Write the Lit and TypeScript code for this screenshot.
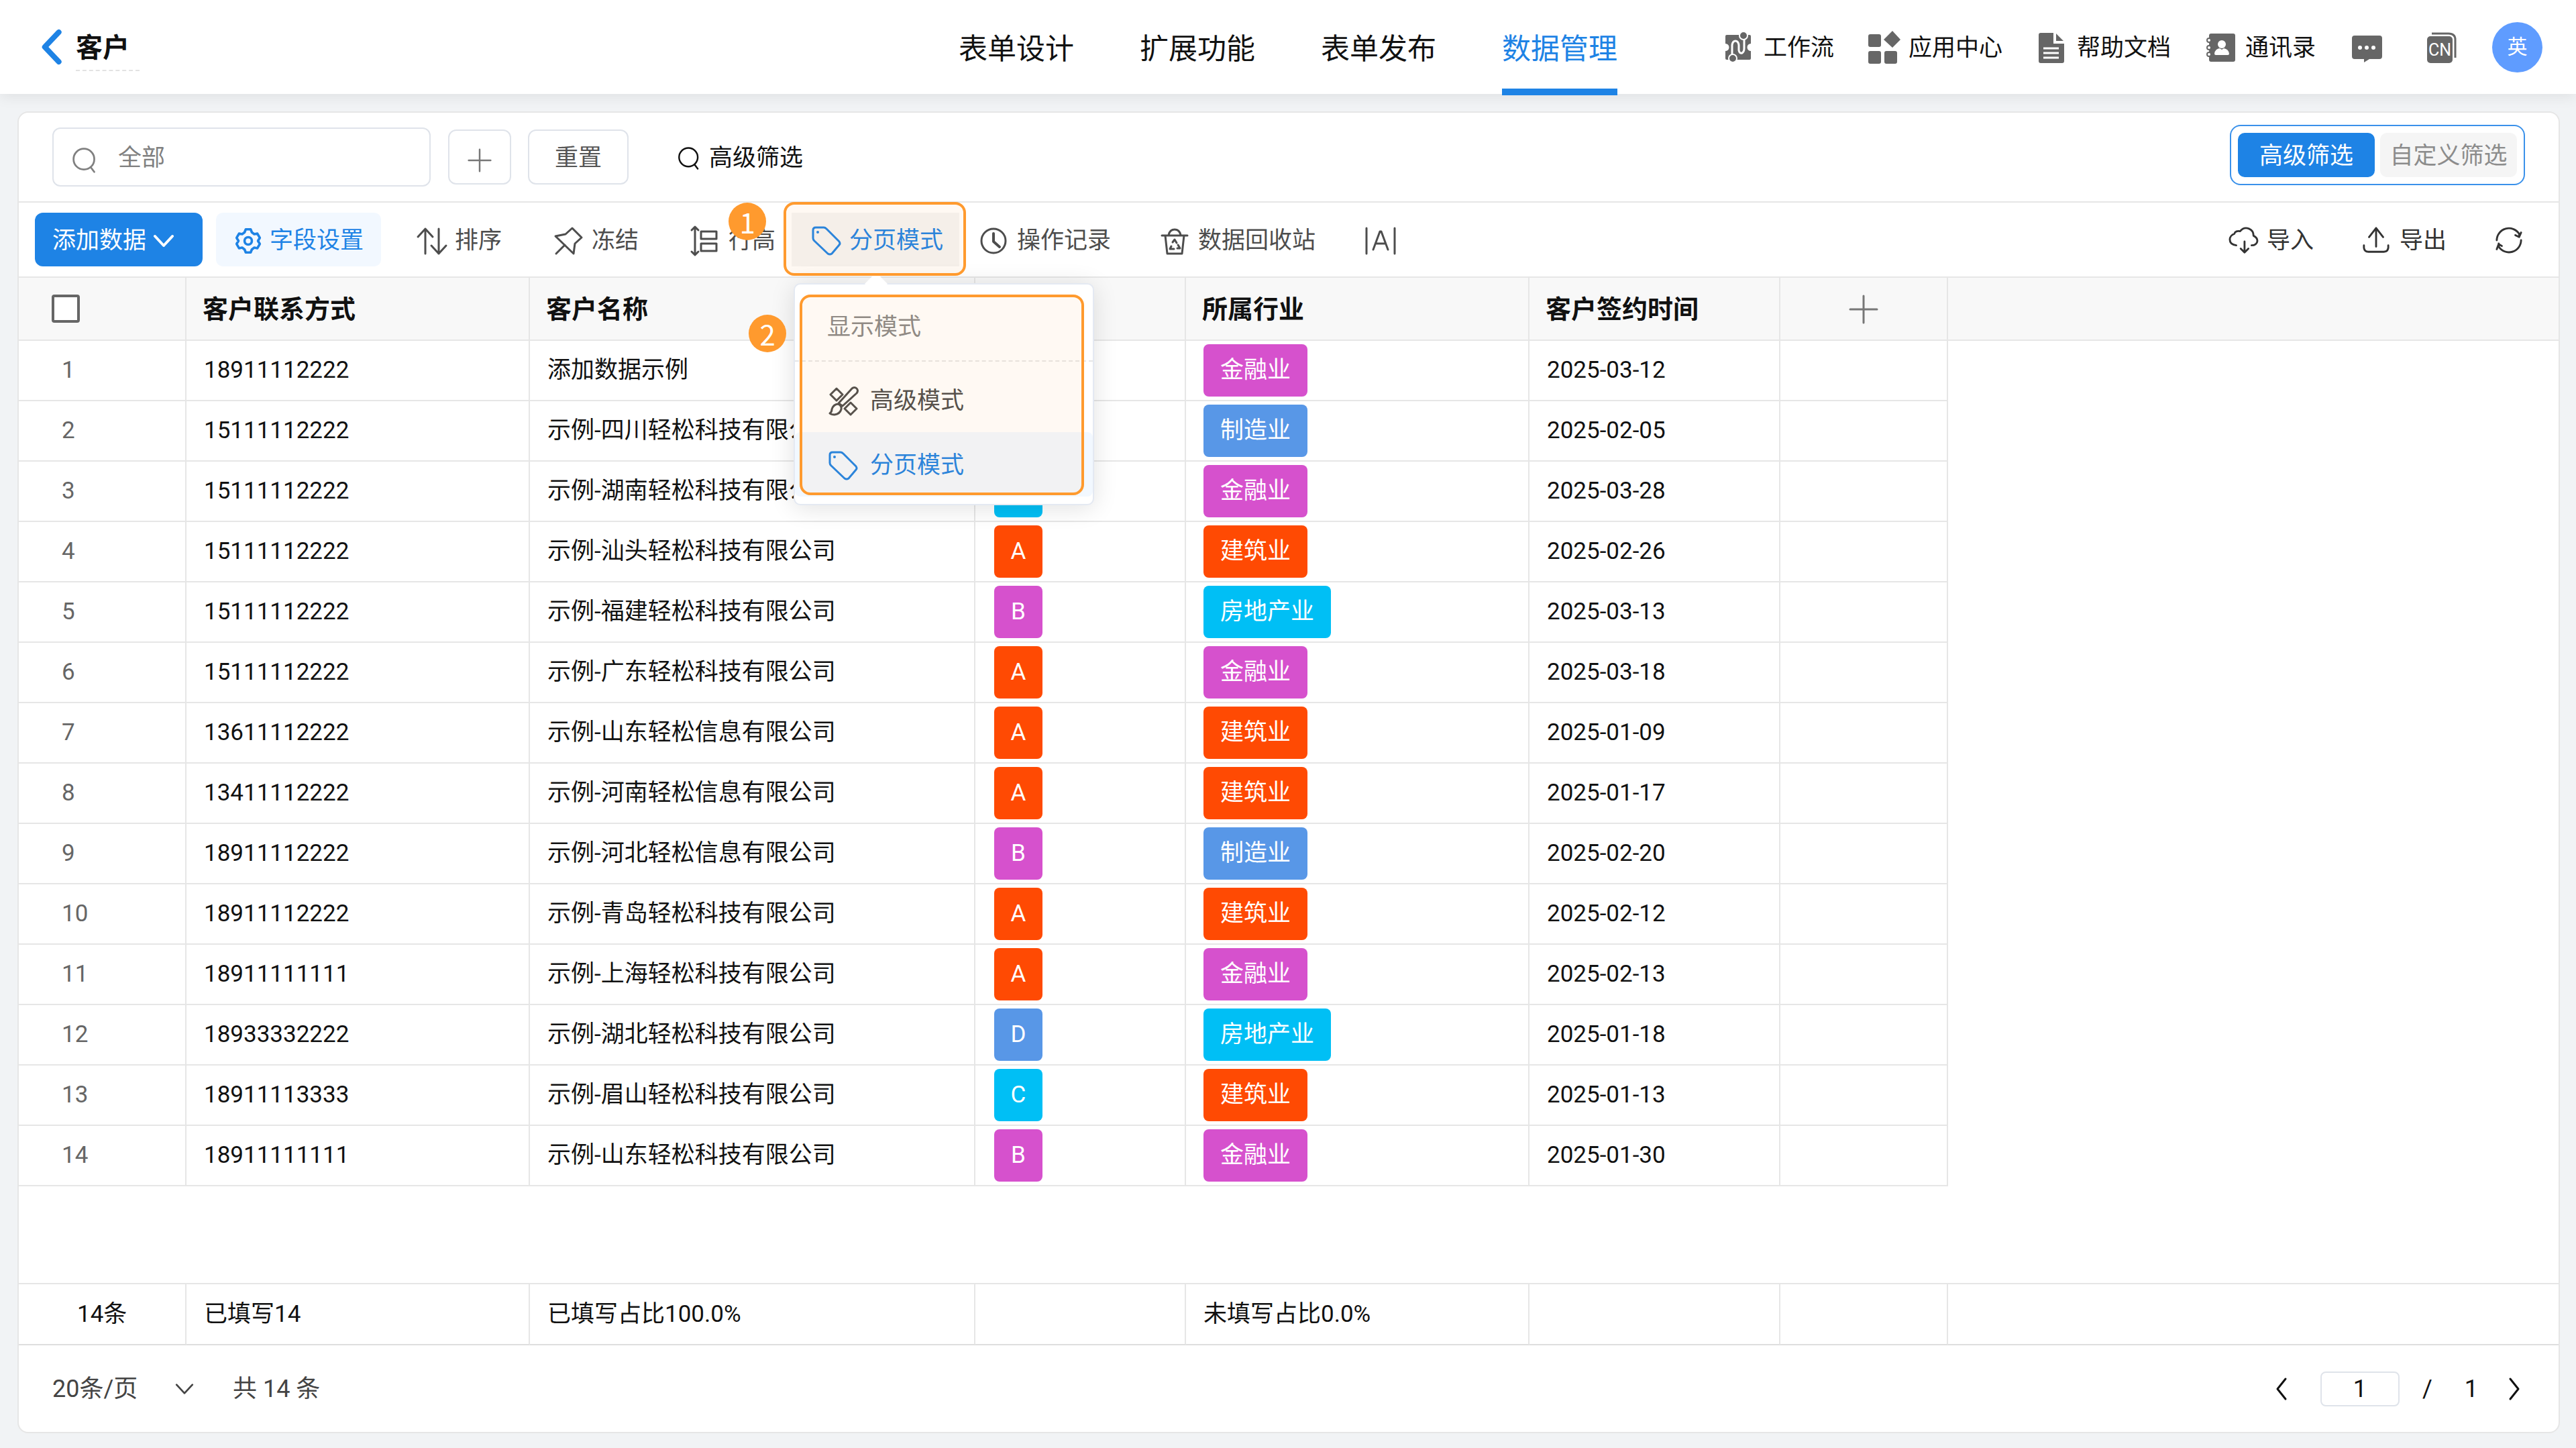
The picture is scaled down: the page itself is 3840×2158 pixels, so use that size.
import { LitElement, html, css, svg, nothing } from "lit";
import { customElement, state } from "lit/decorators.js";
import { classMap } from "lit/directives/class-map.js";

type Tone = "magenta" | "blue" | "red" | "cyan";

interface Customer {
  phone: string;
  name: string;
  level: string;
  industry: string;
  signed: string;
}

const ROWS: Customer[] = [
  { phone: "18911112222", name: "添加数据示例", level: "", industry: "金融业", signed: "2025-03-12" },
  { phone: "15111112222", name: "示例-四川轻松科技有限公司", level: "", industry: "制造业", signed: "2025-02-05" },
  { phone: "15111112222", name: "示例-湖南轻松科技有限公司", level: "C", industry: "金融业", signed: "2025-03-28" },
  { phone: "15111112222", name: "示例-汕头轻松科技有限公司", level: "A", industry: "建筑业", signed: "2025-02-26" },
  { phone: "15111112222", name: "示例-福建轻松科技有限公司", level: "B", industry: "房地产业", signed: "2025-03-13" },
  { phone: "15111112222", name: "示例-广东轻松科技有限公司", level: "A", industry: "金融业", signed: "2025-03-18" },
  { phone: "13611112222", name: "示例-山东轻松信息有限公司", level: "A", industry: "建筑业", signed: "2025-01-09" },
  { phone: "13411112222", name: "示例-河南轻松信息有限公司", level: "A", industry: "建筑业", signed: "2025-01-17" },
  { phone: "18911112222", name: "示例-河北轻松信息有限公司", level: "B", industry: "制造业", signed: "2025-02-20" },
  { phone: "18911112222", name: "示例-青岛轻松科技有限公司", level: "A", industry: "建筑业", signed: "2025-02-12" },
  { phone: "18911111111", name: "示例-上海轻松科技有限公司", level: "A", industry: "金融业", signed: "2025-02-13" },
  { phone: "18933332222", name: "示例-湖北轻松科技有限公司", level: "D", industry: "房地产业", signed: "2025-01-18" },
  { phone: "18911113333", name: "示例-眉山轻松科技有限公司", level: "C", industry: "建筑业", signed: "2025-01-13" },
  { phone: "18911111111", name: "示例-山东轻松科技有限公司", level: "B", industry: "金融业", signed: "2025-01-30" },
];

const LEVEL_TONE: Record<string, Tone> = { A: "red", B: "magenta", C: "cyan", D: "blue" };
const INDUSTRY_TONE: Record<string, Tone> = {
  金融业: "magenta",
  制造业: "blue",
  建筑业: "red",
  房地产业: "cyan",
};

/** Line icons on a 44 × 44 canvas, filled header icons on a 50 × 50 one. */
const SHAPES = {
  back: svg`<path d="M29 3 11 22 29 41" stroke-width="7"/>`,
  search: svg`<circle cx="21" cy="20" r="17"/><path d="M32 33 38 41"/>`,
  plus: svg`<path d="M22 2V42M2 22H42"/>`,
  chevron: svg`<path d="M9 15 22 29 35 15"/>`,
  left: svg`<path d="M28 7 16 22 28 37"/>`,
  right: svg`<path d="M16 7 28 22 16 37"/>`,
  gear: svg`<path d="M18 3h8l2 5 4 3 5-1 4 7-3 5 3 5-4 7-5-1-4 3-2 5h-8l-2-5-4-3-5 1-4-7 3-5-3-5 4-7 5 1 4-3Z"/><circle cx="22" cy="22" r="6"/>`,
  sort: svg`<path d="M12 41V4M1 16 12 4 23 16M32 4V41M21 29 32 41 43 29"/>`,
  pin: svg`<path d="M27 3 41 17 31 26 29 41 2 15 17 12ZM16 28 3 41"/>`,
  rowHeight: svg`<path d="M6 1V43M1 6 6 1 11 6M1 38 6 43 11 38M15 8H38V19H15ZM15 26H38V37H15Z"/>`,
  tag: svg`<path d="M6 2H18Q20 2 22 4L41 23Q43 26 41 28L30 41Q27 43 24 41L4 22Q2 20 2 18V6Q2 2 6 2Z"/><circle cx="9" cy="9" r="1" stroke-width="2"/>`,
  clock: svg`<circle cx="21" cy="22" r="18"/><path d="M21 11V23L30 31" stroke-width="4"/>`,
  recycle: svg`<path d="M2 14H40M7 14 10 41H32L35 14M12 13Q14 5 21 5 28 5 30 13" /><path d="M18 24 21 20 24 25M26 28 29 33H25M20 34H14L16 30" stroke-width="3"/>`,
  autoWidth: svg`<path d="M2 3V41M44 3V41M12 35 22 8H24L34 35M16 26H30" stroke-width="3"/>`,
  cloud: svg`<path d="M11 29C4 28 1 25 1 20 1 15 5 12 8 11 9 7 13 6 17 7 21 2 26 1 31 3 36 5 38 9 38 14 42 16 44 19 44 22 44 26 40 29 35 29M24 23V40M18 34 24 40 30 34"/>`,
  upload: svg`<path d="M22 31V2M11 16 22 2 33 16M3 29V33Q4 39 10 39H34Q40 39 41 33V29"/>`,
  refresh: svg`<path d="M3 21A19 19 0 0 1 38 11V16L32 13M41 9 38 16M41 21A19 19 0 0 1 6 31V26M3 35 6 27 11 30"/>`,
  brush: svg`<path d="M12 3 21 12 12 21 3 12ZM33 24 42 33 33 42 24 33ZM35 3Q39 0 42 3 45 6 42 10L21 29 15 25ZM14 26Q20 28 19 34 17 41 9 42 4 42 2 40 5 38 5 34 7 27 14 26Z"/>`,
};

const SOLIDS = {
  flow: svg`<path fill="currentColor" d="M7 7H39Q41 7 41 9V20A5 5 0 0 0 41 31V42Q41 44 39 44H5Q3 44 3 42V31A5 5 0 0 0 3 20V9Q3 7 5 7Z"/>
    <path fill="none" stroke="#fff" stroke-width="3" d="M13 36V22Q14 16 18 16 22 16 23 22V30Q24 35 28 34 31 32 31 27V12"/>
    <g fill="currentColor" stroke="#fff" stroke-width="2"><circle cx="30" cy="8" r="6"/><circle cx="14" cy="42" r="6"/></g>`,
  apps: svg`<g fill="currentColor"><rect x="0" y="6" width="19" height="19" rx="3"/><rect x="0" y="31" width="19" height="19" rx="3"/><rect x="24" y="31" width="19" height="19" rx="3"/><path d="M36 1 48 14 36 26 23 14Z"/></g>`,
  doc: svg`<path fill="currentColor" d="M6 4H25V20H41V46Q41 49 38 49H6Q3 49 3 46V7Q3 4 6 4ZM29 5 40 16H29Z"/>
    <path stroke="#fff" stroke-width="3" d="M10 27H33M10 34H33M10 41H33"/>`,
  contacts: svg`<path fill="currentColor" d="M9 5H42Q45 5 45 8V44Q45 47 42 47H9Q6 47 6 44V8Q6 5 9 5Z"/>
    <g fill="#fff" stroke="currentColor" stroke-width="2"><circle cx="6" cy="15" r="3"/><circle cx="6" cy="26" r="3"/><circle cx="6" cy="36" r="3"/></g>
    <g fill="#fff"><circle cx="25" cy="21" r="6"/><path d="M14 35Q15 28 22 27L25 29 28 27Q35 28 36 35 36 37 34 37H16Q14 37 14 35Z"/></g>`,
  chat: svg`<path fill="currentColor" d="M7 8H44Q48 8 48 12V39Q48 43 44 43H29L21 48V43H7Q3 43 3 39V12Q3 8 7 8Z"/>
    <g fill="#fff"><circle cx="15" cy="26" r="3"/><circle cx="25" cy="26" r="3"/><circle cx="35" cy="26" r="3"/></g>`,
  lang: svg`<path fill="none" stroke="currentColor" stroke-width="3" d="M11 5H36Q46 5 46 14V41"/>
    <rect x="4" y="9" width="38" height="40" rx="5" fill="currentColor"/>
    <text x="23" y="38" font-size="25" text-anchor="middle" fill="#fff">CN</text>`,
};

@customElement("app-root")
export class AppRoot extends LitElement {
  @state() private mode = "paged";

  static styles = css`
    * {
      box-sizing: border-box;
    }
    :host {
      --blue: #1e83e5;
      --line: #e6e6e6;
      --control: #dfe3ea;
      --orange: #ff9a2e;
      display: flex;
      flex-direction: column;
      min-height: 100vh;
      background: #f1f3f5;
      color: #111;
      font: 35px/44px Roboto, "Noto Sans CJK SC", sans-serif;
    }
    button,
    input,
    select {
      font: inherit;
      color: inherit;
      margin: 0;
    }
    button {
      display: flex;
      align-items: center;
      padding: 4px 0 0;
      border: 0;
      background: none;
      white-space: nowrap;
    }
    a {
      color: inherit;
      text-decoration: none;
    }
    svg {
      display: block;
      flex: none;
      overflow: visible;
    }
    .line-icon {
      width: 44px;
      height: 44px;
      fill: none;
      stroke: currentColor;
      stroke-width: 3;
      stroke-linecap: round;
      stroke-linejoin: round;
    }
    .solid-icon {
      width: 50px;
      height: 50px;
      color: #666;
    }
    .small {
      width: 36px;
      height: 36px;
    }

    .top {
      display: grid;
      grid-template-columns: 1fr auto 1fr;
      height: 140px;
      padding: 0 50px;
      background: #fff;
      box-shadow: 0 4px 20px rgba(0, 0, 0, 0.08);
      z-index: 1;
    }
    .back {
      display: flex;
      align-items: center;
      gap: 8px;
      padding-left: 4px;
    }
    .back svg {
      width: 51px;
      height: 52px;
      color: var(--blue);
    }
    .title {
      margin: 4px 0 0;
      padding: 12px 15px 10px 0;
      border-bottom: 2px dashed #e2e2e2;
      font-size: 40px;
      line-height: 44px;
      font-weight: 700;
    }
    .nav {
      display: flex;
      gap: 98px;
      margin-bottom: -2px;
      font-size: 43px;
    }
    .nav a {
      display: flex;
      align-items: center;
      padding-top: 14px;
      border-bottom: 10px solid transparent;
    }
    .nav .on {
      color: var(--blue);
      border-color: var(--blue);
    }
    .links {
      display: flex;
      align-items: center;
      justify-content: flex-end;
      gap: 51px;
    }
    .links a {
      display: flex;
      align-items: center;
      gap: 10px;
      padding-top: 4px;
    }
    .links a svg {
      margin-top: -4px;
    }
    .links button {
      padding: 0;
    }
    .links .lang {
      margin-left: 10px;
    }
    .avatar {
      width: 75px;
      height: 75px;
      border-radius: 50%;
      background: #5f9cff;
      color: #fff;
      font-size: 30px;
      justify-content: center;
    }

    .card {
      flex: 1;
      display: flex;
      flex-direction: column;
      margin: 26px 24px 22px 26px;
      border: 2px solid var(--line);
      border-radius: 16px;
      background: #fff;
    }
    .filters {
      display: flex;
      align-items: center;
      height: 134px;
      padding: 0 50px;
      border-bottom: 2px solid var(--line);
    }
    .search {
      display: flex;
      align-items: center;
      gap: 30px;
      width: 564px;
      height: 88px;
      padding: 4px 26px 0;
      border: 2px solid var(--control);
      border-radius: 12px;
      color: #808080;
    }
    .search svg {
      width: 40px;
      height: 40px;
      margin-top: 6px;
    }
    .search input {
      flex: 1;
      min-width: 0;
      padding: 0;
      border: 0;
      background: none;
      outline: 0;
    }
    .search input::placeholder {
      color: #808080;
      opacity: 1;
    }
    .outline {
      justify-content: center;
      height: 82px;
      border: 2px solid var(--control);
      border-radius: 12px;
      color: #555;
    }
    .add-filter {
      width: 94px;
      margin: 0 25px 0 26px;
      padding-top: 10px;
      color: #777;
    }
    .reset {
      width: 150px;
    }
    .advanced {
      gap: 12px;
      margin-left: 72px;
    }
    .switch {
      display: flex;
      gap: 8px;
      margin-left: auto;
      margin-bottom: 6px;
      padding: 10px;
      border: 2px solid #3a91ea;
      border-radius: 16px;
    }
    .switch button {
      justify-content: center;
      width: 204px;
      height: 66px;
      border-radius: 10px;
      background: #f5f5f5;
      color: #8c8c8c;
    }
    .switch .on {
      background: var(--blue);
      color: #fff;
    }

    .toolbar {
      display: flex;
      align-items: center;
      gap: 20px;
      height: 112px;
      padding: 0 53px 0 24px;
      border-bottom: 2px solid var(--line);
      color: #4d4d4d;
    }
    .group {
      display: flex;
    }
    .spaced {
      gap: 24px;
      margin-left: 4px;
    }
    .tool {
      gap: 12px;
      height: 80px;
      padding: 4px 24px 0 30px;
    }
    .add {
      gap: 4px;
      padding: 4px 36px 0 26px;
      border-radius: 12px;
      background: var(--blue);
      color: #fff;
    }
    .add svg {
      stroke-width: 4;
    }
    .field {
      padding: 4px 26px 0 28px;
      border-radius: 10px;
      background: #f2f8ff;
      color: var(--blue);
    }
    .field svg {
      width: 40px;
      height: 40px;
      stroke-width: 4;
    }
    .push {
      display: flex;
      gap: 72px;
      margin-left: auto;
      color: #333;
    }
    .push button {
      gap: 14px;
    }
    .push svg {
      width: 42px;
      height: 42px;
    }

    .mode {
      position: relative;
    }
    .mode .tool {
      background: #f5f5f5;
      color: var(--blue);
    }
    .menu {
      position: absolute;
      z-index: 2;
      top: 105px;
      left: 3px;
      width: 448px;
      padding: 12px 0 11px;
      border: 2px solid #e4e9f2;
      border-radius: 10px;
      background: #fff;
      box-shadow: 0 4px 36px rgba(0, 0, 0, 0.12);
    }
    .menu::before {
      content: "";
      position: absolute;
      top: -13px;
      left: 109px;
      width: 24px;
      height: 24px;
      background: #fff;
      transform: rotate(45deg);
    }
    .menu-title {
      height: 103px;
      margin: 0 0 9px;
      padding: 30px 50px 0 48px;
      border-bottom: 2px dashed var(--line);
      color: #8a8a8a;
    }
    .option {
      width: 100%;
      height: 96px;
      gap: 18px;
      padding: 4px 50px 0;
      border-radius: 8px;
    }
    .option.on {
      background: #f2f8ff;
      color: var(--blue);
    }
    .marker {
      position: absolute;
      z-index: 3;
      border: 4px solid var(--orange);
      border-radius: 16px;
      background: rgba(255, 154, 46, 0.06);
      pointer-events: none;
    }
    .marker-tool {
      inset: -16px -10px -14px -12px;
    }
    .marker-menu {
      inset: 15px 13px 13px 7px;
    }
    .step {
      position: absolute;
      z-index: 4;
      width: 56px;
      height: 56px;
      border-radius: 50%;
      background: var(--orange);
      color: #fff;
      font: 42px/56px "Noto Sans CJK SC", sans-serif;
      text-align: center;
    }
    .step-tool {
      top: -15px;
      left: -94px;
    }
    .step-menu {
      top: 45px;
      left: -69px;
    }

    table {
      width: 100%;
      table-layout: fixed;
      border-collapse: separate;
      border-spacing: 0;
    }
    .c-index {
      width: 250px;
    }
    .c-wide {
      width: 512px;
    }
    .c-name {
      width: 664px;
    }
    .c-level {
      width: 314px;
    }
    .c-date {
      width: 374px;
    }
    .c-add {
      width: 250px;
    }
    th,
    td {
      height: 90px;
      padding: 0 26px;
      border-right: 2px solid var(--line);
      border-bottom: 2px solid var(--line);
      text-align: left;
      white-space: nowrap;
      overflow: hidden;
    }
    th {
      height: 94px;
      padding: 2px 24px 0;
      background: #f8f8f8;
      font-size: 38px;
      font-weight: 700;
    }
    th:first-child {
      padding: 0 0 0 49px;
    }
    th button {
      margin: 0 auto;
      padding: 0;
      color: #777;
    }
    th svg {
      stroke-width: 4;
    }
    th:last-child,
    td:last-child {
      border-right: 0;
    }
    tbody td:last-child {
      border-bottom: 0;
    }
    .index {
      padding-left: 64px;
      color: #666;
    }
    .level {
      padding-left: 28px;
    }
    .check {
      display: block;
      appearance: none;
      width: 42px;
      height: 42px;
      border: 4px solid #666;
      border-radius: 4px;
      background: #fff;
    }
    .tag {
      display: block;
      width: fit-content;
      min-width: 72px;
      height: 78px;
      padding: 0 25px;
      border-radius: 8px;
      color: #fff;
      line-height: 78px;
      text-align: center;
    }
    .level .tag {
      padding: 0;
    }
    .magenta {
      background: #d651cd;
    }
    .blue {
      background: #5897e7;
    }
    .red {
      background: #ff4a03;
    }
    .cyan {
      background: #00bff5;
    }
    .summary {
      margin-top: auto;
      border-top: 2px solid var(--line);
    }
    .summary td {
      height: 91px;
      border-bottom: 2px solid #dedede;
    }
    .summary .total {
      padding-left: 87px;
    }

    .pager {
      display: flex;
      align-items: center;
      justify-content: space-between;
      height: 129px;
      padding: 0 44px 0 50px;
      color: #444;
      font-size: 36px;
    }
    .sizes {
      display: flex;
      align-items: center;
      gap: 52px;
    }
    .size {
      display: grid;
      align-items: center;
      width: 217px;
    }
    .size select,
    .size svg {
      grid-area: 1 / 1;
    }
    .size select {
      appearance: none;
      height: 60px;
      padding: 0;
      border: 0;
      background: none;
    }
    .size svg {
      width: 40px;
      justify-self: end;
      pointer-events: none;
    }
    .pages {
      display: flex;
      align-items: center;
      color: #111;
    }
    .pages button {
      padding: 0;
    }
    .pages input {
      width: 118px;
      height: 52px;
      margin: 0 34px 0 36px;
      padding: 0;
      border: 2px solid var(--control);
      border-radius: 8px;
      text-align: center;
    }
    .last {
      margin: 0 32px 0 48px;
    }
  `;

  private icon(name: keyof typeof SHAPES, extra = "") {
    return html`<svg class="line-icon ${extra}" viewBox="0 0 44 44" aria-hidden="true">${SHAPES[name]}</svg>`;
  }

  private solid(name: keyof typeof SOLIDS) {
    return html`<svg class="solid-icon" viewBox="0 0 50 50" aria-hidden="true">${SOLIDS[name]}</svg>`;
  }

  private columns() {
    return html`<colgroup>
      <col class="c-index" /><col class="c-wide" /><col class="c-name" /><col class="c-level" />
      <col class="c-wide" /><col class="c-date" /><col class="c-add" /><col />
    </colgroup>`;
  }

  private tag(text: string, tone: Tone) {
    return text ? html`<span class="tag ${tone}">${text}</span>` : nothing;
  }

  private option(id: string, label: string, icon: keyof typeof SHAPES) {
    const on = this.mode === id;
    return html`<button
      role="menuitemradio"
      aria-checked=${on ? "true" : "false"}
      class=${classMap({ option: true, on })}
      @click=${() => (this.mode = id)}
    >
      ${this.icon(icon)}${label}
    </button>`;
  }

  private header() {
    return html`<header class="top">
      <div class="back">
        <a href="#back" aria-label="返回">${this.icon("back")}</a>
        <h1 class="title">客户</h1>
      </div>
      <nav class="nav">
        <a href="#design">表单设计</a>
        <a href="#extend">扩展功能</a>
        <a href="#publish">表单发布</a>
        <a href="#data" class="on" aria-current="page">数据管理</a>
      </nav>
      <div class="links">
        <a href="#flow">${this.solid("flow")}工作流</a>
        <a href="#apps">${this.solid("apps")}应用中心</a>
        <a href="#docs">${this.solid("doc")}帮助文档</a>
        <a href="#contacts">${this.solid("contacts")}通讯录</a>
        <button aria-label="消息">${this.solid("chat")}</button>
        <button class="lang" aria-label="语言">${this.solid("lang")}</button>
        <button class="avatar">英</button>
      </div>
    </header>`;
  }

  private filters() {
    return html`<div class="filters">
      <label class="search">
        ${this.icon("search")}
        <input type="text" placeholder="全部" aria-label="搜索" />
      </label>
      <button class="outline add-filter" aria-label="添加条件">${this.icon("plus", "small")}</button>
      <button class="outline reset">重置</button>
      <button class="advanced">${this.icon("search", "small")}高级筛选</button>
      <div class="switch">
        <button class="on">高级筛选</button>
        <button>自定义筛选</button>
      </div>
    </div>`;
  }

  private toolbar() {
    return html`<div class="toolbar">
      <button class="tool add">添加数据${this.icon("chevron")}</button>
      <button class="tool field">${this.icon("gear")}字段设置</button>
      <div class="group spaced">
        <button class="tool">${this.icon("sort")}排序</button>
        <button class="tool">${this.icon("pin")}冻结</button>
        <div class="group">
          <button class="tool">${this.icon("rowHeight")}行高</button>
          <div class="mode">
            <button class="tool" aria-haspopup="menu" aria-expanded="true">${this.icon("tag")}分页模式</button>
            <span class="marker marker-tool"></span>
            <span class="step step-tool">1</span>
            <div class="menu" role="menu">
              <p class="menu-title">显示模式</p>
              ${this.option("advanced", "高级模式", "brush")} ${this.option("paged", "分页模式", "tag")}
              <span class="marker marker-menu"></span>
              <span class="step step-menu">2</span>
            </div>
          </div>
          <button class="tool">${this.icon("clock")}操作记录</button>
        </div>
      </div>
      <button class="tool">${this.icon("recycle")}数据回收站</button>
      <button class="tool" aria-label="自适应列宽">${this.icon("autoWidth")}</button>
      <div class="push">
        <button>${this.icon("cloud")}导入</button>
        <button>${this.icon("upload")}导出</button>
        <button aria-label="刷新">${this.icon("refresh")}</button>
      </div>
    </div>`;
  }

  private grid() {
    return html`<table>
        ${this.columns()}
        <thead>
          <tr>
            <th><input class="check" type="checkbox" aria-label="全选" /></th>
            <th>客户联系方式</th>
            <th>客户名称</th>
            <th></th>
            <th>所属行业</th>
            <th>客户签约时间</th>
            <th><button aria-label="添加列">${this.icon("plus")}</button></th>
            <th></th>
          </tr>
        </thead>
        <tbody>
          ${ROWS.map(
            (row, i) => html`<tr>
              <td class="index">${i + 1}</td>
              <td>${row.phone}</td>
              <td>${row.name}</td>
              <td class="level">${this.tag(row.level, LEVEL_TONE[row.level])}</td>
              <td>${this.tag(row.industry, INDUSTRY_TONE[row.industry])}</td>
              <td>${row.signed}</td>
              <td></td>
              <td></td>
            </tr>`
          )}
        </tbody>
      </table>
      <table class="summary">
        ${this.columns()}
        <tfoot>
          <tr>
            <td class="total">14条</td>
            <td>已填写14</td>
            <td>已填写占比100.0%</td>
            <td></td>
            <td>未填写占比0.0%</td>
            <td></td>
            <td></td>
            <td></td>
          </tr>
        </tfoot>
      </table>`;
  }

  private pager() {
    return html`<footer class="pager">
      <div class="sizes">
        <label class="size">
          <select aria-label="每页条数">
            <option>20条/页</option>
            <option>50条/页</option>
          </select>
          ${this.icon("chevron")}
        </label>
        <span>共 14 条</span>
      </div>
      <div class="pages">
        <button aria-label="上一页">${this.icon("left")}</button>
        <input type="text" value="1" aria-label="页码" />
        <span>/</span>
        <span class="last">1</span>
        <button aria-label="下一页">${this.icon("right")}</button>
      </div>
    </footer>`;
  }

  render() {
    return html`${this.header()}
      <main class="card">${this.filters()} ${this.toolbar()} ${this.grid()} ${this.pager()}</main>`;
  }
}
